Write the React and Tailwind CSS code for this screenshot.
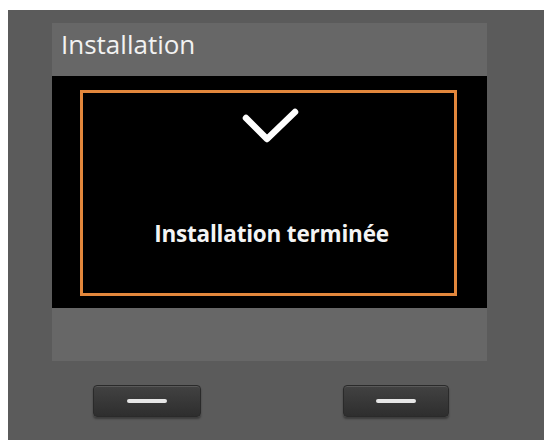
export default function App() {
  return (
    <div className="w-[548px] h-[440px] bg-white pt-[10px] pl-[8px] pr-[4px] overflow-hidden" style={{ fontFamily: '"Open Sans", "Noto Sans", sans-serif' }}>
      <div className="h-[430px] bg-[#5b5b5b] pt-[13px] pl-[44px] flex flex-col">
        <div className="w-[435px] bg-[#676767] flex flex-col">
          <div className="h-[53px] pt-[4px] pl-[9px]">
            <span className="text-[26px] leading-[34px] text-[#f2f2f2]">Installation</span>
          </div>
          <div className="h-[232px] bg-black pt-[14px] pl-[28px]">
            <div className="w-[377px] h-[206px] border-[3px] border-[#e3873c] flex flex-col items-center pt-[13px]">
              <svg width="60" height="40" viewBox="0 0 60 40" className="ml-[5px]">
                <polyline points="5,12 26,33 54,6" fill="none" stroke="#ffffff" strokeWidth="6.5" strokeLinecap="round" strokeLinejoin="round" />
              </svg>
              <div className="mt-[73px] ml-[6px] text-[22.5px] leading-[30px] font-bold tracking-[-0.2px] text-[#f4f4f4]">
                Installation terminée
              </div>
            </div>
          </div>
          <div className="h-[53px]"></div>
        </div>
        <div className="flex mt-[24px] pl-[41px]">
          <div className="w-[108px] h-[32px] rounded-[4px] bg-gradient-to-b from-[#424242] to-[#2e2e2e] border border-[#2a2a2a] shadow-[0_2px_2px_rgba(0,0,0,0.35),inset_0_1px_0_rgba(255,255,255,0.12)] flex items-center justify-center">
            <div className="w-[40px] h-[4px] rounded-full bg-[#e6e6e6]"></div>
          </div>
          <div className="w-[106px] h-[32px] ml-[142px] rounded-[4px] bg-gradient-to-b from-[#424242] to-[#2e2e2e] border border-[#2a2a2a] shadow-[0_2px_2px_rgba(0,0,0,0.35),inset_0_1px_0_rgba(255,255,255,0.12)] flex items-center justify-center">
            <div className="w-[40px] h-[4px] rounded-full bg-[#e6e6e6]"></div>
          </div>
        </div>
      </div>
    </div>
  );
}
